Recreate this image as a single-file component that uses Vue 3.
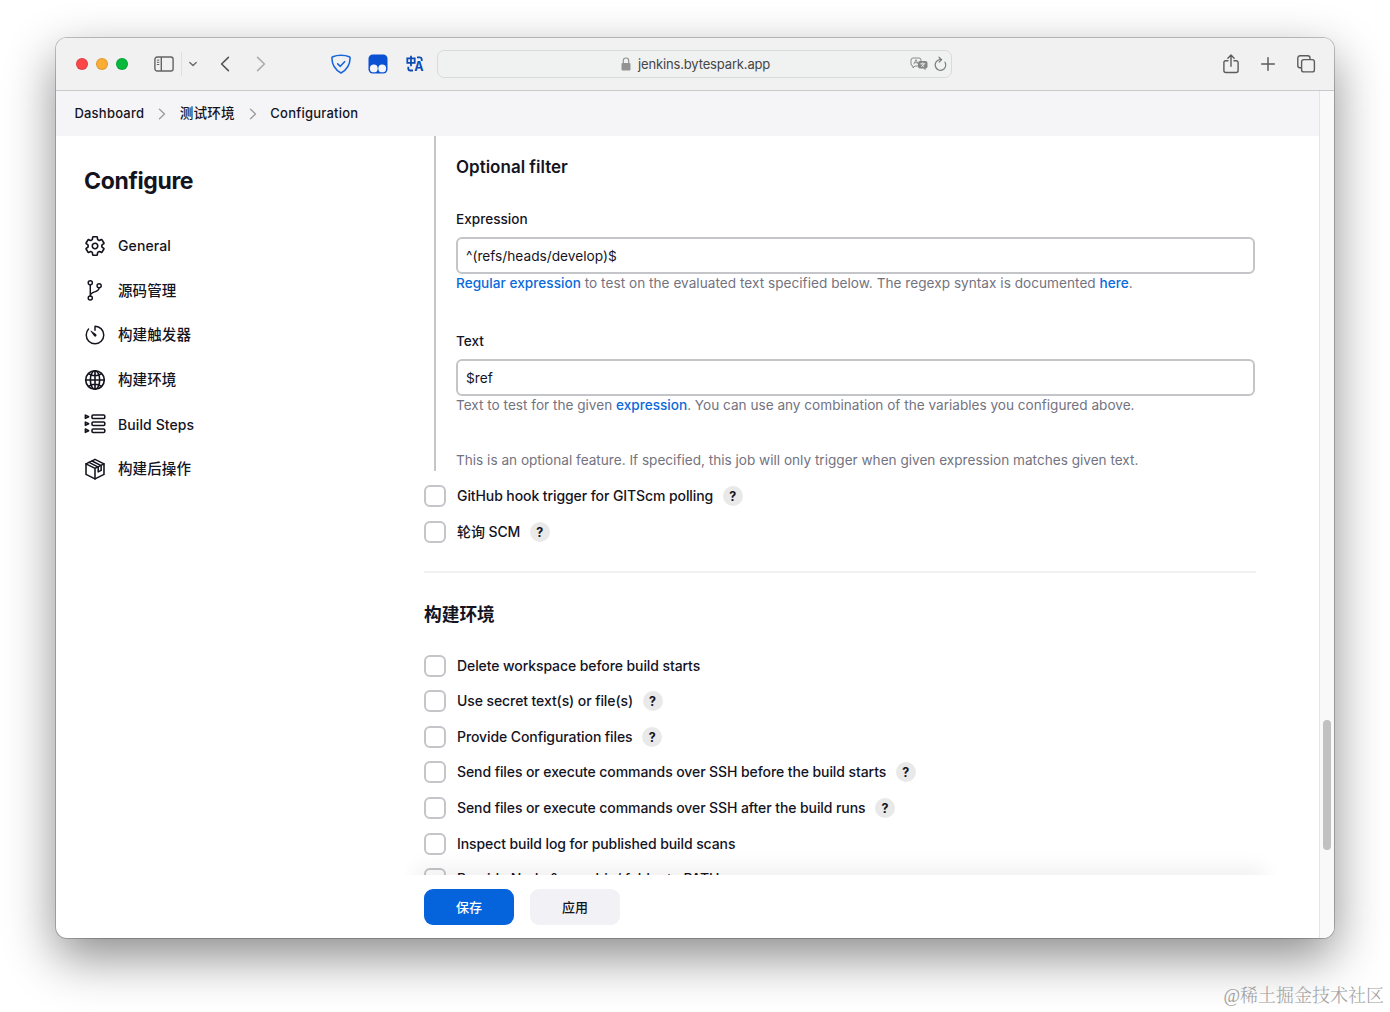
<script setup>
import { reactive } from 'vue'

const crumbs = ['Dashboard', '测试环境', 'Configuration']

const menu = [
  { icon: 'gear', label: 'General' },
  { icon: 'branch', label: '源码管理', zh: true },
  { icon: 'timer', label: '构建触发器', zh: true },
  { icon: 'globe', label: '构建环境', zh: true },
  { icon: 'steps', label: 'Build Steps' },
  { icon: 'cube', label: '构建后操作', zh: true }
]

const filter = reactive({
  expression: '^(refs/heads/develop)$',
  text: '$ref'
})

const triggers = reactive([
  { label: 'GitHub hook trigger for GITScm polling', help: true, checked: false },
  { label: '轮询 SCM', help: true, checked: false }
])

const environment = reactive([
  { label: 'Delete workspace before build starts', help: false, checked: false },
  { label: 'Use secret text(s) or file(s)', help: true, checked: false },
  { label: 'Provide Configuration files', help: true, checked: false },
  { label: 'Send files or execute commands over SSH before the build starts', help: true, checked: false },
  { label: 'Send files or execute commands over SSH after the build runs', help: true, checked: false },
  { label: 'Inspect build log for published build scans', help: false, checked: false },
  { label: 'Provide Node & npm bin/ folder to PATH', help: false, checked: false }
])
</script>

<template>
  <div class="desktop">
    <div class="window">
      <header class="toolbar">
        <div class="lights">
          <i class="red"></i>
          <i class="yellow"></i>
          <i class="green"></i>
        </div>
        <svg class="ic-sidebar" width="20" height="16" viewBox="0 0 20 16" fill="none" stroke="#636363" stroke-width="1.4">
          <rect x="0.9" y="1" width="18.2" height="14" rx="2.2" />
          <path d="M7.3 1v14" />
          <path d="M2.9 4.1h2.4M2.9 6.3h2.4M2.9 8.5h2.4" stroke-width="1" />
        </svg>
        <span class="divider"></span>
        <svg class="ic-down" width="10" height="6" viewBox="0 0 10 6" fill="none" stroke="#6a6a6a" stroke-width="1.4" stroke-linecap="round" stroke-linejoin="round">
          <path d="M1.8 1.4L5 4.4l3.2-3" />
        </svg>
        <svg class="ic-back" width="10" height="16" viewBox="0 0 10 16" fill="none" stroke="#555" stroke-width="1.6" stroke-linecap="round" stroke-linejoin="round">
          <path d="M8.4 1.4L1.6 8l6.8 6.6" />
        </svg>
        <svg class="ic-forward" width="10" height="16" viewBox="0 0 10 16" fill="none" stroke="#acacac" stroke-width="1.6" stroke-linecap="round" stroke-linejoin="round">
          <path d="M1.6 1.4L8.4 8l-6.8 6.6" />
        </svg>
        <svg class="ic-shield" width="20" height="20" viewBox="0 0 20 20" fill="none" stroke="#1a66dc" stroke-width="1.6" stroke-linecap="round" stroke-linejoin="round">
          <path d="M10 1.2c3 0 5.9.5 8.2 1.5.6.3.9.7.9 1.3C19 11 15.5 16 10 19 4.5 16 1 11 .9 4c0-.6.3-1 .9-1.3C4.1 1.7 7 1.2 10 1.2z" />
          <path d="M6.7 9.8l2.6 2.5 4.3-4.6" />
        </svg>
        <svg class="ic-monkey" width="20" height="20" viewBox="0 0 20 20">
          <rect x="0.5" y="0.5" width="19" height="19" rx="4.2" fill="#0b51d3" />
          <circle cx="5.8" cy="14.4" r="3.9" fill="#f3f5fa" />
          <circle cx="14.2" cy="14.4" r="3.9" fill="#f3f5fa" />
        </svg>
        <svg class="ic-translate" width="20" height="20" viewBox="0 0 20 20">
          <g fill="none" stroke="#0d4bb5" stroke-width="1.8">
            <path d="M2.3 4.4h7.4v4.4H2.3zM6 1.8v10.4" />
            <path d="M12 3.3h2.7a2 2 0 0 1 2 2v1.8" />
            <path d="M3.3 12.8v1.7a2 2 0 0 0 2 2H8" />
          </g>
          <text x="9.2" y="17.4" class="glyph-a">A</text>
        </svg>
        <div class="address">
          <div class="site">
            <svg width="10" height="14" viewBox="0 0 10 14">
              <rect x="0.5" y="6" width="9" height="7.5" rx="1" fill="#939393" />
              <path d="M2.3 6V3.7a2.7 2.7 0 0 1 5.4 0V6" fill="none" stroke="#939393" stroke-width="1.2" />
            </svg>
            <span>jenkins.bytespark.app</span>
          </div>
          <svg class="ic-lang" width="18" height="14" viewBox="0 0 18 14">
            <path d="M3 1h6a2 2 0 0 1 2 2v4a2 2 0 0 1-2 2H5L3 11V9a2 2 0 0 1-2-2V3a2 2 0 0 1 2-2z" fill="none" stroke="#8a8a8a" />
            <path d="M3.9 7.2L6 2.6l2.1 4.6M4.6 5.7h2.8" fill="none" stroke="#8a8a8a" stroke-width="0.9" />
            <path d="M10 4h5.5a2 2 0 0 1 2 2v3.5a2 2 0 0 1-2 2v1.8l-2-1.8H10a2 2 0 0 1-2-2V6a2 2 0 0 1 2-2z" fill="#858585" />
            <path d="M12.8 5.4v1.2M10.3 6.8h5M11.2 9.9l3-3M14.3 9.9l-2.8-2.6" stroke="#f2f2f2" stroke-width="0.9" />
          </svg>
          <svg class="ic-reload" width="14" height="16" viewBox="0 0 14 16" fill="none" stroke="#7b7b7b" stroke-width="1.2" stroke-linecap="round" stroke-linejoin="round">
            <path d="M12 6.2A5.3 5.3 0 1 1 7 3.7h1.2" />
            <path d="M6 1.2l2.6 2.5L6.2 6.2" />
          </svg>
        </div>
        <svg class="ic-share" width="16" height="20" viewBox="0 0 16 20" fill="none" stroke="#5c5c5c" stroke-width="1.4" stroke-linecap="round" stroke-linejoin="round">
          <path d="M5 6.7H2.8A1.9 1.9 0 0 0 .9 8.6v8a1.9 1.9 0 0 0 1.9 1.9h10.4a1.9 1.9 0 0 0 1.9-1.9v-8a1.9 1.9 0 0 0-1.9-1.9H11" />
          <path d="M8 12.2V1.3M4.9 4.2L8 1.1l3.1 3.1" />
        </svg>
        <svg class="ic-plus" width="16" height="16" viewBox="0 0 16 16" fill="none" stroke="#5c5c5c" stroke-width="1.5" stroke-linecap="round">
          <path d="M8 1.7v12.6M1.7 8h12.6" />
        </svg>
        <svg class="ic-tabs" width="20" height="20" viewBox="0 0 20 20" fill="none" stroke="#5c5c5c" stroke-width="1.4">
          <rect x="5.6" y="5.6" width="12.8" height="12.3" rx="2.2" />
          <path d="M5.6 13.7H4a2.2 2.2 0 0 1-2.2-2.2V4A2.2 2.2 0 0 1 4 1.8h7.8A2.2 2.2 0 0 1 14 4v1.6" />
        </svg>
      </header>

      <div class="viewport">
        <div class="page">
          <nav class="breadcrumbs">
            <template v-for="(crumb, i) in crumbs" :key="crumb">
              <svg v-if="i > 0" width="8" height="12" viewBox="0 0 8 12" fill="none" stroke="#9a9aa2" stroke-width="1.3" stroke-linecap="round" stroke-linejoin="round">
                <path d="M1.5 1.2L6.5 6l-5 4.8" />
              </svg>
              <a>{{ crumb }}</a>
            </template>
          </nav>

          <div class="body">
            <aside class="side">
              <h1>Configure</h1>
              <ul>
                <li v-for="item in menu" :key="item.label">
                  <svg v-if="item.icon === 'gear'" viewBox="0 0 512 512" class="heavy">
                    <path d="M262.29 192.31a64 64 0 1057.4 57.4 64.13 64.13 0 00-57.4-57.4zM416.39 256a154.34 154.34 0 01-1.53 20.79l45.21 35.46a10.81 10.81 0 012.45 13.75l-42.77 74a10.81 10.81 0 01-13.14 4.59l-44.9-18.08a16.11 16.11 0 00-15.17 1.75A164.48 164.48 0 01325 400.8a15.94 15.94 0 00-8.82 12.14l-6.73 47.89a11.08 11.08 0 01-10.68 9.17h-85.54a11.11 11.11 0 01-10.69-8.87l-6.72-47.82a16.07 16.07 0 00-9-12.22 155.3 155.3 0 01-21.46-12.57 16 16 0 00-15.11-1.71l-44.89 18.07a10.81 10.81 0 01-13.14-4.58l-42.77-74a10.8 10.8 0 012.45-13.75l38.21-30a16.05 16.05 0 006-14.08c-.36-4.17-.58-8.33-.58-12.5s.21-8.27.58-12.35a16 16 0 00-6.07-13.94l-38.19-30A10.81 10.81 0 0149.48 186l42.77-74a10.81 10.81 0 0113.14-4.59l44.9 18.08a16.11 16.11 0 0015.17-1.75A164.48 164.48 0 01187 111.2a15.94 15.94 0 008.82-12.14l6.73-47.89A11.08 11.08 0 01213.23 42h85.54a11.11 11.11 0 0110.69 8.87l6.72 47.82a16.07 16.07 0 009 12.22 155.3 155.3 0 0121.46 12.57 16 16 0 0015.11 1.71l44.89-18.07a10.81 10.81 0 0113.14 4.58l42.77 74a10.8 10.8 0 01-2.45 13.75l-38.21 30a16.05 16.05 0 00-6.05 14.08c.33 4.14.55 8.3.55 12.47z" />
                  </svg>
                  <svg v-else-if="item.icon === 'branch'" viewBox="0 0 512 512">
                    <circle cx="146" cy="66" r="48" />
                    <circle cx="146" cy="418" r="48" />
                    <circle cx="352" cy="134" r="48" />
                    <path d="M146 370V114M352 182c0 128-206 60-206 188" />
                  </svg>
                  <svg v-else-if="item.icon === 'timer'" viewBox="0 0 512 512">
                    <path d="M106 118A202 202 0 0052 254c-1 113 91 206 204 206s204-91 204-204c0-111-88-201-198-204-4 0-6 2-6 5v91" />
                    <path class="solid" d="M233 279l-79-113a8 8 0 0111-11l113 79a32 32 0 01-37 53 33 33 0 01-8-8z" />
                  </svg>
                  <svg v-else-if="item.icon === 'globe'" viewBox="0 0 512 512" class="heavy">
                    <circle cx="256" cy="256" r="216" />
                    <ellipse cx="256" cy="256" rx="108" ry="216" />
                    <path d="M112 112c40 28 90 44 144 44s104-16 144-44M400 400c-40-28-90-44-144-44s-104 16-144 44M256 40v432M40 256h432" />
                  </svg>
                  <svg v-else-if="item.icon === 'steps'" viewBox="0 0 24 24">
                    <g class="thin">
                      <rect x="8.7" y="2.2" width="14" height="3.9" rx="1.3" />
                      <rect x="8.7" y="9.8" width="14" height="3.9" rx="1.3" />
                      <rect x="8.7" y="17.4" width="14" height="3.9" rx="1.3" />
                      <path d="M1.5 2.3l3.6 1.8-3.6 1.8zM1.5 9.9l3.6 1.8-3.6 1.8zM1.5 17.5l3.6 1.8-3.6 1.8z" />
                    </g>
                  </svg>
                  <svg v-else viewBox="0 0 24 24">
                    <g class="thin">
                      <path d="M12 1.5l9.8 4.9v11.5L12 22.8l-9.8-4.9V6.4z" />
                      <path d="M2.2 6.4L12 11.3l9.8-4.9M12 11.3v11.5" />
                      <path d="M8.8 3.3l9.9 5v5.2l-3.2 1.6V9.9L5.5 4.8" />
                    </g>
                  </svg>
                  <span :class="{ zh: item.zh }">{{ item.label }}</span>
                </li>
              </ul>
            </aside>

            <main class="form">
              <div class="scroll">
                <section class="nested">
                  <h3>Optional filter</h3>
                  <div class="field">
                    <label for="expression">Expression</label>
                    <input id="expression" v-model="filter.expression" type="text" />
                    <p class="wide"><a>Regular expression</a> to test on the evaluated text specified below. The regexp syntax is documented <a>here</a>.</p>
                  </div>
                  <div class="field last">
                    <label for="text">Text</label>
                    <input id="text" v-model="filter.text" type="text" />
                    <p>Text to test for the given <a>expression</a>. You can use any combination of the variables you configured above.</p>
                  </div>
                  <p>This is an optional feature. If specified, this job will only trigger when given expression matches given text.</p>
                </section>

                <div class="checks">
                  <label v-for="item in triggers" :key="item.label" class="check">
                    <input v-model="item.checked" type="checkbox" />
                    <span>{{ item.label }}</span>
                    <b v-if="item.help">?</b>
                  </label>
                </div>

                <hr />
                <h2>构建环境</h2>

                <div class="checks">
                  <label v-for="item in environment" :key="item.label" class="check">
                    <input v-model="item.checked" type="checkbox" />
                    <span>{{ item.label }}</span>
                    <b v-if="item.help">?</b>
                  </label>
                </div>
                <div class="fade"></div>
              </div>

              <footer class="actions">
                <button type="button" class="primary">保存</button>
                <button type="button">应用</button>
              </footer>
            </main>
          </div>
        </div>
        <div class="scrollbar"><i></i></div>
      </div>
    </div>
    <div class="watermark">@稀土掘金技术社区</div>
  </div>
</template>

<style>
body {
  background: #fff;
  overflow: hidden;
}
</style>

<style scoped>
.desktop {
  position: relative;
  box-sizing: border-box;
  width: 1390px;
  height: 1012px;
  padding: 38px 0 0 56px;
  overflow: hidden;
  color: #14141f;
  font-family: Inter, "Noto Sans CJK SC", sans-serif;
  font-size: 14px;
}

.desktop * {
  box-sizing: border-box;
}

.window {
  display: flex;
  flex-direction: column;
  width: 1278px;
  height: 900px;
  overflow: hidden;
  border-radius: 11px;
  background: #fff;
  box-shadow: 0 0 0 1px rgba(0, 0, 0, 0.22), 0 19px 50px rgba(0, 0, 0, 0.46);
}

.toolbar {
  display: flex;
  align-items: center;
  flex: none;
  height: 53px;
  padding: 0 18px 1px 20px;
  border-bottom: 1px solid #c9c9c9;
  background: #f1f1f1;
}

.toolbar svg {
  flex: none;
}

.lights {
  display: flex;
  gap: 8px;
}

.lights i {
  width: 12px;
  height: 12px;
  border: 0.5px solid rgba(0, 0, 0, 0.12);
  border-radius: 50%;
}

.red { background: #fc4748; }
.yellow { background: #fdad33; }
.green { background: #04b93c; }

.ic-sidebar { margin-left: 26px; }

.divider {
  width: 1px;
  height: 24px;
  margin-left: 7px;
  background: #e0e0e0;
}

.ic-down { margin-left: 6px; }
.ic-back { margin-left: 22px; }
.ic-forward { margin-left: 26px; }
.ic-shield { margin-left: 64.5px; }
.ic-monkey { margin-left: 17px; }
.ic-translate { margin-left: 17px; }

.glyph-a {
  fill: #0d4bb5;
  font: 700 12.5px Inter, sans-serif;
}

.address {
  display: flex;
  align-items: center;
  width: 516px;
  height: 28px;
  margin-left: 12.5px;
  padding: 0 4px 0 183px;
  border: 1px solid #d9dada;
  border-radius: 7px;
  background: #f0f1f1;
}

.site {
  display: flex;
  align-items: center;
  flex: 1;
  gap: 7px;
  color: #464646;
  font-size: 13px;
  letter-spacing: -0.15px;
}

.ic-reload { margin-left: 5px; }
.ic-share { margin-left: 271px; }
.ic-plus { margin-left: 21px; }
.ic-tabs { margin-left: 20px; }

.viewport {
  display: flex;
  flex: 1;
  min-height: 0;
}

.page {
  display: flex;
  flex-direction: column;
  flex: 1;
}

.scrollbar {
  width: 15px;
  padding: 629px 3px 0;
  border-left: 1px solid #e4e4e4;
  background: #f9f9f9;
}

.scrollbar i {
  display: block;
  width: 8px;
  height: 130px;
  border-radius: 4px;
  background: #c1c1c1;
}

.breadcrumbs {
  display: flex;
  align-items: center;
  flex: none;
  gap: 13.7px;
  height: 45px;
  padding-left: 18.4px;
  background: #f5f5f8;
  font-size: 13px;
  font-weight: 500;
  letter-spacing: 0.23px;
}

.breadcrumbs a {
  padding-bottom: 2px;
}

.breadcrumbs a:nth-of-type(2) {
  padding-bottom: 3px;
  font-size: 13.6px;
}

.body {
  display: flex;
  flex: 1;
  min-height: 0;
}

.side {
  width: 349px;
  padding: 30px 28px 0;
}

.side h1 {
  margin: 0;
  font-size: 23px;
  font-weight: 650;
  line-height: 30px;
  letter-spacing: -0.35px;
}

.side ul {
  display: flex;
  flex-direction: column;
  gap: 22.6px;
  margin: 39px 0 0;
  padding: 0;
  list-style: none;
}

.side li {
  display: flex;
  align-items: center;
  gap: 12px;
  height: 22px;
  font-weight: 450;
  letter-spacing: 0.1px;
}

.side li span {
  padding-bottom: 0.4px;
}

.side li svg {
  width: 22px;
  height: 22px;
  fill: none;
  stroke: #14141f;
  stroke-width: 34;
  stroke-linecap: round;
  stroke-linejoin: round;
}

.side li svg.heavy {
  stroke-width: 38;
}

.side li svg .thin {
  stroke-width: 1.7;
}

.side li svg .solid {
  fill: #14141f;
  stroke: none;
}

.side li .zh {
  padding-bottom: 2.5px;
  font-size: 14.5px;
}

.form {
  display: flex;
  flex-direction: column;
  flex: 1;
}

.scroll {
  position: relative;
  flex: 1;
  min-height: 0;
  padding-left: 19px;
  overflow: hidden;
}

.nested {
  width: 821px;
  height: 335px;
  margin-left: 10px;
  padding: 20px 0 0 20px;
  border-left: 2px solid #c3c5c8;
}

h3 {
  margin: 0 0 30px;
  font-size: 17px;
  font-weight: 600;
  line-height: 22px;
}

.field {
  height: 122px;
}

.field.last {
  height: 121px;
}

.field label {
  display: block;
  margin-bottom: 7px;
  font-weight: 500;
  font-size: 13.6px;
  line-height: 22px;
}

.field input {
  display: block;
  width: 799px;
  height: 37px;
  padding: 0 8px;
  border: 2px solid #c3c5c8;
  border-radius: 6px;
  outline: 0;
  background: #fff;
  color: #14141f;
  font-family: inherit;
  font-size: 13.7px;
}

.nested p {
  margin: 0;
  color: #73737f;
  font-size: 13.6px;
  line-height: 18px;
  white-space: nowrap;
}

.nested .wide {
  letter-spacing: 0.03px;
}

.nested a {
  color: #0b6adb;
  font-weight: 500;
}

.checks {
  display: flex;
  flex-direction: column;
  gap: 13.6px;
  padding-top: 14px;
}

.check {
  display: flex;
  align-items: center;
  height: 22px;
  font-weight: 500;
  letter-spacing: -0.09px;
}

.check span {
  padding-bottom: 1px;
}

.check input {
  width: 22px;
  height: 22px;
  margin: 0 11px 0 0;
  border: 2px solid #c3c5c8;
  border-radius: 6px;
  appearance: none;
  background: #fff;
}

.check b {
  width: 20px;
  height: 20px;
  margin-left: 9.5px;
  border-radius: 50%;
  background: #e9e9ea;
  font-size: 12.5px;
  font-weight: 700;
  line-height: 21px;
  text-align: center;
}

hr {
  width: 832px;
  height: 2px;
  margin: 28px 0 0;
  border: 0;
  background: #f1f1f3;
}

h2 {
  margin: 28px 0 13px;
  font-size: 17.7px;
  font-weight: 600;
  line-height: 27px;
}

/* soft shadow cast upwards by the sticky action bar */
.fade {
  position: absolute;
  right: 62px;
  bottom: -12px;
  left: 18px;
  height: 12px;
  box-shadow: 0 0 20px 8px rgba(0, 0, 0, 0.06);
}

.actions {
  display: flex;
  flex: none;
  gap: 16px;
  height: 63px;
  padding: 14px 0 0 19px;
  background: #fff;
}

.actions button {
  width: 90px;
  height: 36px;
  padding: 0 0 2px;
  border: 0;
  border-radius: 9px;
  background: #f2f2f6;
  color: #14141f;
  font-family: inherit;
  font-size: 13px;
  font-weight: 500;
}

.actions .primary {
  background: #0564dc;
  color: #fff;
}

.watermark {
  position: absolute;
  right: 6px;
  bottom: 3px;
  color: #a0a0a0;
  font-family: "Liberation Serif", "Noto Serif CJK SC", "Noto Sans CJK SC", serif;
  font-size: 18px;
  font-weight: 300;
  line-height: 26px;
}
</style>
